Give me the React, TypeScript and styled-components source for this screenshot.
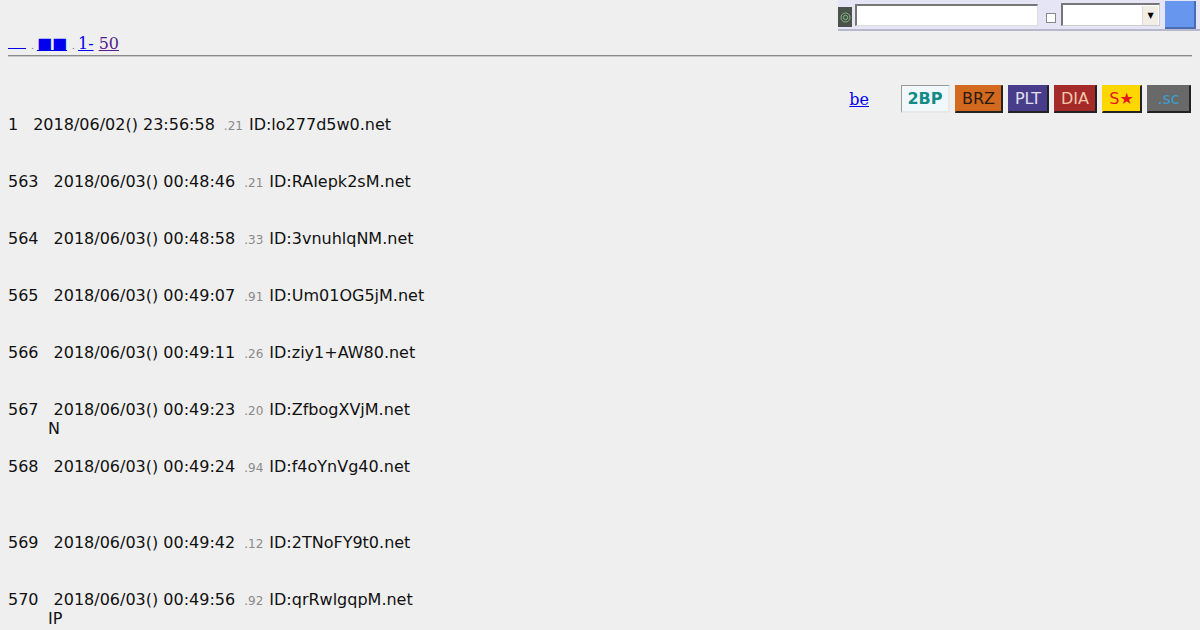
import React from "react";
import styled, { createGlobalStyle } from "styled-components";

const Global = createGlobalStyle`
  html, body {
    margin: 0;
    padding: 0;
    background: #efefef;
  }
  body {
    padding: 8px;
    font-family: "DejaVu Serif", serif;
    font-size: 16px;
    color: #111;
  }
`;

const SearchBar = styled.form`
  position: fixed;
  top: 0;
  right: 0;
  width: 362px;
  height: 31px;
  box-sizing: border-box;
  background: #e5e5f6;
  border-bottom: 2px solid #b8b8cc;
  display: flex;
  align-items: center;
  margin: 0;
`;

const Emblem = styled.span`
  width: 14px;
  height: 20px;
  background: #4b524b;
  display: flex;
  align-items: center;
  justify-content: center;
  margin-top: 5px;
`;

const TextBox = styled.span`
  display: block;
  width: 183px;
  height: 22px;
  box-sizing: border-box;
  margin-left: 3px;
  background: #fff;
  border-top: 2px solid #777;
  border-left: 2px solid #777;
  border-bottom: 1px solid #ddd;
  border-right: 1px solid #ddd;
`;

const Tick = styled.span`
  display: block;
  width: 8px;
  height: 8px;
  margin: 6px 0 0 8px;
  background: #fff;
  border: 1px solid #888;
`;

const Pick = styled.span`
  display: flex;
  justify-content: flex-end;
  align-items: center;
  width: 99px;
  height: 23px;
  box-sizing: border-box;
  margin-left: 5px;
  background: #fff;
  border-top: 2px solid #777;
  border-left: 2px solid #777;
  border-bottom: 1px solid #ccc;
  border-right: 1px solid #ccc;
`;

const Arrow = styled.span`
  width: 15px;
  height: 19px;
  margin-right: 1px;
  background: #f2eee6;
  border-left: 1px solid #ddd;
  display: flex;
  align-items: center;
  justify-content: center;
  font-family: "DejaVu Sans", sans-serif;
  font-size: 8px;
  color: #000;
`;

const Go = styled.span`
  display: block;
  width: 31px;
  height: 28px;
  box-sizing: border-box;
  margin-left: 5px;
  background: #6796ee;
  border-right: 2px solid #4a6cb0;
  border-bottom: 2px solid #4a6cb0;
`;

const Nav = styled.div`
  padding-top: 26px;
  line-height: 19px;
  height: 19px;
  white-space: nowrap;
`;

const NavLink = styled.a<{ $visited?: boolean }>`
  color: ${(p) => (p.$visited ? "#551a8b" : "#0000ee")};
  text-decoration: underline;
`;

const Blank = styled.a`
  display: inline-block;
  width: 18px;
  height: 14px;
  vertical-align: baseline;
  border-bottom: 1px solid #0000ee;
`;

const Dot = styled.span`
  display: inline-block;
  font-size: 9px;
  color: #666;
  margin: 0 3px 0 5px;
`;

const Rule = styled.hr`
  margin: 2px 0 28px;
  border: 0;
  border-top: 1px solid #8a8a8a;
  border-bottom: 1px solid #c8c8c8;
`;

const Boards = styled.div`
  display: flex;
  justify-content: flex-end;
  align-items: center;
  gap: 5px;
  height: 28px;
  padding-right: 1px;
`;

const BeLink = styled.a`
  color: #0000ee;
  text-decoration: underline;
  margin-right: 27px;
  line-height: 19px;
`;

const Board = styled.span<{ $bg: string; $fg: string; $bold?: boolean; $w: number; $light?: boolean }>`
  display: flex;
  align-items: center;
  justify-content: center;
  box-sizing: border-box;
  width: ${(p) => p.$w}px;
  height: 28px;
  background: ${(p) => p.$bg};
  color: ${(p) => p.$fg};
  font-family: "DejaVu Sans", sans-serif;
  font-size: 16px;
  font-weight: ${(p) => (p.$bold ? 700 : 400)};
  border-top: 1px solid ${(p) => (p.$light ? "#999" : "transparent")};
  border-left: 1px solid ${(p) => (p.$light ? "#999" : "transparent")};
  border-right: 2px solid ${(p) => (p.$light ? "#e8e8e8" : "#222")};
  border-bottom: 2px solid ${(p) => (p.$light ? "#e8e8e8" : "#222")};
`;

const Thread = styled.dl`
  margin: 2px 0 0;
  font-family: "DejaVu Sans", sans-serif;
  font-size: 16px;
  line-height: 19px;
`;

const Head = styled.dt`
  display: block;
  height: 19px;
  white-space: pre;
`;

const Num = styled.span`
  margin-right: 15px;
`;

const Stamp = styled.span`
  margin-right: 9px;
`;

const Sub = styled.span`
  font-size: 12px;
  line-height: 1;
  color: #8a8a8a;
  margin-right: 6px;
`;

const Body = styled.dd`
  margin: 0 0 19px 40px;
  min-height: 19px;
`;

const Line = styled.div`
  height: 19px;
`;

type Post = { no: number; date: string; sub: string; id: string; body: string[] };

const posts: Post[] = [
  { no: 1, date: "2018/06/02() 23:56:58", sub: ".21", id: "ID:lo277d5w0.net", body: [""] },
  { no: 563, date: "2018/06/03() 00:48:46", sub: ".21", id: "ID:RAIepk2sM.net", body: [""] },
  { no: 564, date: "2018/06/03() 00:48:58", sub: ".33", id: "ID:3vnuhlqNM.net", body: [""] },
  { no: 565, date: "2018/06/03() 00:49:07", sub: ".91", id: "ID:Um01OG5jM.net", body: [""] },
  { no: 566, date: "2018/06/03() 00:49:11", sub: ".26", id: "ID:ziy1+AW80.net", body: [""] },
  { no: 567, date: "2018/06/03() 00:49:23", sub: ".20", id: "ID:ZfbogXVjM.net", body: ["N"] },
  { no: 568, date: "2018/06/03() 00:49:24", sub: ".94", id: "ID:f4oYnVg40.net", body: ["", ""] },
  { no: 569, date: "2018/06/03() 00:49:42", sub: ".12", id: "ID:2TNoFY9t0.net", body: [""] },
  { no: 570, date: "2018/06/03() 00:49:56", sub: ".92", id: "ID:qrRwlgqpM.net", body: ["IP"] },
];

const boards = [
  { label: "2BP", bg: "#f0f8fc", fg: "#138a84", bold: true, w: 49, light: true },
  { label: "BRZ", bg: "#d2691e", fg: "#2a1a10", w: 48 },
  { label: "PLT", bg: "#483d8b", fg: "#e0e0ee", w: 41 },
  { label: "DIA", bg: "#a52a2a", fg: "#f2c8a8", w: 43 },
  { label: "S★", bg: "#ffd700", fg: "#e8141e", w: 40 },
  { label: ".sc", bg: "#696969", fg: "#3a9fcf", w: 44 },
];

const App = () => {
  return (
    <>
      <Global />
      <SearchBar>
        <Emblem>
          <svg width="11" height="11" viewBox="0 0 11 11">
            <circle cx="5.5" cy="5.5" r="4.5" fill="none" stroke="#7fb87f" strokeWidth="1" />
            <circle cx="5.5" cy="5.5" r="2.2" fill="none" stroke="#7fb87f" strokeWidth="1" />
          </svg>
        </Emblem>
        <TextBox />
        <Tick />
        <Pick>
          <Arrow>▼</Arrow>
        </Pick>
        <Go />
      </SearchBar>

      <Nav>
        <Blank href="#" />
        <Dot>.</Dot>
        <NavLink href="#">■■</NavLink>
        <Dot>.</Dot>
        <NavLink href="#">1-</NavLink> <NavLink href="#" $visited>50</NavLink>
      </Nav>
      <Rule />

      <Boards>
        <BeLink href="#">be</BeLink>
        {boards.map((b) => (
          <Board key={b.label} $bg={b.bg} $fg={b.fg} $bold={b.bold} $w={b.w} $light={b.light}>
            {b.label}
          </Board>
        ))}
      </Boards>

      <Thread>
        {posts.map((p) => (
          <React.Fragment key={p.no}>
            <Head>
              <Num>{p.no}</Num>
              <Stamp>{p.date}</Stamp>
              <Sub>{p.sub}</Sub>
              <span>{p.id}</span>
            </Head>
            <Body>
              {p.body.map((line, i) => (
                <Line key={i}>{line || "\u00a0"}</Line>
              ))}
            </Body>
          </React.Fragment>
        ))}
      </Thread>
    </>
  );
};

export default App;
